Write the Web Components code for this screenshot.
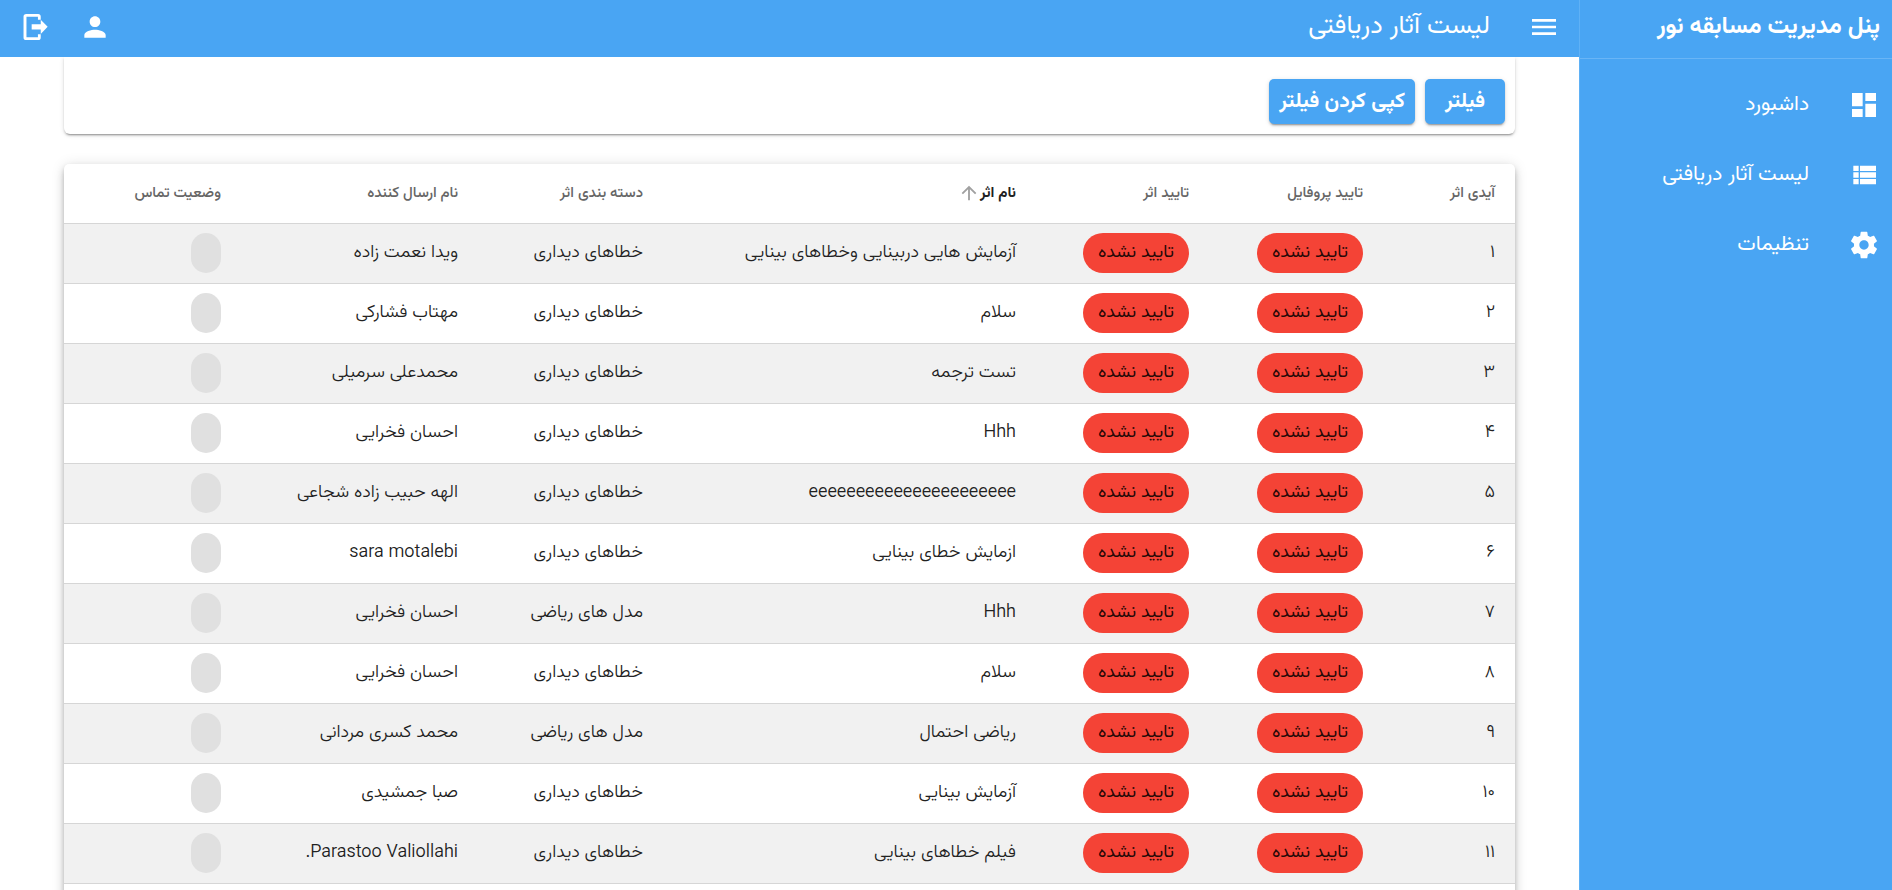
<!DOCTYPE html>
<html lang="fa" dir="rtl">
<head>
<meta charset="utf-8">
<title>لیست آثار دریافتی</title>
<style>
  html, body { margin: 0; height: 100%; }
  body {
    font-family: Vazirmatn, Roboto, "DejaVu Sans", sans-serif;
    background: #fff;
    color: #212121;
    --brand: #49a5f3;
  }
</style>
</head>
<body>
<admin-shell>
  <side-bar slot="side" heading="پنل مدیریت مسابقه نور">
    <nav-item icon="dashboard">داشبورد</nav-item>
    <nav-item icon="list">لیست آثار دریافتی</nav-item>
    <nav-item icon="settings">تنظیمات</nav-item>
  </side-bar>
  <top-bar slot="top" heading="لیست آثار دریافتی">
    <icon-button slot="menu" icon="menu" label="منو"></icon-button>
    <icon-button slot="actions" icon="person" label="حساب کاربری"></icon-button>
    <icon-button slot="actions" icon="logout" label="خروج"></icon-button>
  </top-bar>
  <filter-card>
    <action-button>فیلتر</action-button>
    <action-button>کپی کردن فیلتر</action-button>
  </filter-card>
  <works-table></works-table>
</admin-shell>

<script>
const ICONS = {
  menu: 'M3 18h18v-2H3v2zm0-5h18v-2H3v2zm0-7v2h18V6H3z',
  dashboard: 'M3 13h8V3H3v10zm0 8h8v-6H3v6zm10 0h8V11h-8v10zm0-18v6h8V3h-8z',
  list: 'M4 14h4v-4H4v4zm0 5h4v-4H4v4zM4 9h4V5H4v4zm5 5h12v-4H9v4zm0 5h12v-4H9v4zM9 5v4h12V5H9z',
  settings: 'M19.43 12.98c.04-.32.07-.64.07-.98s-.03-.66-.07-.98l2.11-1.65c.19-.15.24-.42.12-.64l-2-3.46c-.12-.22-.39-.3-.61-.22l-2.49 1c-.52-.4-1.08-.73-1.69-.98l-.38-2.65C14.46 2.18 14.25 2 14 2h-4c-.25 0-.46.18-.49.42l-.38 2.65c-.61.25-1.17.59-1.69.98l-2.49-1c-.23-.09-.49 0-.61.22l-2 3.46c-.13.22-.07.49.12.64l2.11 1.65c-.04.32-.07.65-.07.98s.03.66.07.98l-2.11 1.65c-.19.15-.24.42-.12.64l2 3.46c.12.22.39.3.61.22l2.49-1c.52.4 1.08.73 1.69.98l.38 2.65c.03.24.24.42.49.42h4c.25 0 .46-.18.49-.42l.38-2.65c.61-.25 1.17-.59 1.69-.98l2.49 1c.23.09.49 0 .61-.22l2-3.46c.12-.22.07-.49-.12-.64l-2.11-1.65zM12 15.5c-1.93 0-3.5-1.57-3.5-3.5s1.57-3.5 3.5-3.5 3.5 1.57 3.5 3.5-1.57 3.5-3.5 3.5z',
  person: 'M12 12c2.21 0 4-1.79 4-4s-1.79-4-4-4-4 1.79-4 4 1.79 4 4 4zm0 2c-2.67 0-8 1.34-8 4v2h16v-2c0-2.66-5.33-4-8-4z',
  logout: 'M16.3 17.3v-3.4H9.5v-4h6.8V6.5l5.2 5.4-5.2 5.4M14.3 2.2a2 2 0 0 1 2 2v2.3h-2.1V4.4H5.6v15.2h8.6v-2.1h2.1v2.3a2 2 0 0 1-2 2H5.4a2 2 0 0 1-2-2V4.2a2 2 0 0 1 2-2h8.9z',
  arrowUp: 'M4 12l1.41 1.41L11 7.83V20h2V7.83l5.58 5.59L20 12l-8-8-8 8z'
};
const icon = (name) => `<svg viewBox="0 0 24 24" fill="currentColor" aria-hidden="true"><path d="${ICONS[name]}"/></svg>`;

class Base extends HTMLElement {
  connectedCallback() {
    if (!this.shadowRoot) this.attachShadow({ mode: 'open' }).innerHTML = this.view();
  }
}

customElements.define('admin-shell', class extends Base {
  view() { return `
    <style>
      :host { display: flex; height: 100vh; overflow: hidden; }
      .page { flex: 1; min-width: 0; display: flex; flex-direction: column; }
      main { flex: 1; min-height: 0; overflow: hidden; padding: 0 64px; display: flex; flex-direction: column; gap: 30px; }
    </style>
    <slot name="side"></slot>
    <div class="page"><slot name="top"></slot><main><slot></slot></main></div>`; }
});

customElements.define('side-bar', class extends Base {
  view() { return `
    <style>
      :host { display: block; flex: 0 0 312px; background: var(--brand); color: #fff; border-left: 1px solid #5fb1f6; }
      h1 { margin: 0; height: 58px; padding: 0 12px; border-bottom: 1px solid #69b5f6; font-size: 24px; line-height: 54px; font-weight: 700; white-space: nowrap; }
      nav { display: flex; flex-direction: column; padding-top: 11px; }
    </style>
    <h1>${this.getAttribute('heading')}</h1>
    <nav><slot></slot></nav>`; }
});

customElements.define('nav-item', class extends Base {
  view() { return `
    <style>
      :host { display: block; }
      a { display: flex; align-items: center; gap: 39px; height: 70px; padding: 0 12px; color: inherit; text-decoration: none; font-size: 21px; line-height: 32px; }
      svg { width: 32px; height: 32px; flex: none; }
    </style>
    <a href="#">${icon(this.getAttribute('icon'))}<span><slot></slot></span></a>`; }
});

customElements.define('icon-button', class extends Base {
  view() { return `
    <style>
      :host { display: block; }
      button { display: flex; align-items: center; justify-content: center; width: 60px; height: 54px; padding: 0; border: 0; background: none; color: inherit; cursor: pointer; }
      svg { width: 32px; height: 32px; }
    </style>
    <button type="button" aria-label="${this.getAttribute('label')}">${icon(this.getAttribute('icon'))}</button>`; }
});

customElements.define('top-bar', class extends Base {
  view() { return `
    <style>
      :host { display: flex; flex: none; align-items: flex-start; height: 57px; padding: 0 5px; background: var(--brand); color: #fff; position: relative; z-index: 1; }
      h2 { flex: 1; margin: 0; padding: 0 24px; font-size: 26px; line-height: 54px; font-weight: 400; }
    </style>
    <slot name="menu"></slot>
    <h2>${this.getAttribute('heading')}</h2>
    <slot name="actions"></slot>`; }
});

customElements.define('filter-card', class extends Base {
  view() { return `
    <style>
      :host { display: flex; flex: none; gap: 10px; padding: 22px 10px 10px; background: #fff; border-radius: 0 0 6px 6px;
        box-shadow: 0 3px 1px -2px rgba(0,0,0,.2), 0 2px 2px rgba(0,0,0,.14), 0 1px 5px rgba(0,0,0,.12); }
    </style>
    <slot></slot>`; }
});

customElements.define('action-button', class extends Base {
  view() { return `
    <style>
      :host { display: block; }
      button { height: 45px; min-width: 80px; padding: 0 10px; border: 0; border-radius: 5px; background: var(--brand); color: #fff; font: 700 21px/45px Vazirmatn, Roboto, "DejaVu Sans", sans-serif; cursor: pointer;
        box-shadow: 0 3px 1px -2px rgba(0,0,0,.2), 0 2px 2px rgba(0,0,0,.14), 0 1px 5px rgba(0,0,0,.12); }
    </style>
    <button type="button"><slot></slot></button>`; }
});

customElements.define('status-chip', class extends Base {
  view() { return `
    <style>
      :host { display: block; width: fit-content; box-sizing: border-box; height: 40px; padding: 0 15px; border-radius: 20px; background: #e0e0e0; color: rgba(0,0,0,.87); font-size: 18px; line-height: 40px; font-weight: 400; }
      :host([kind="rejected"]) { background: #f44336; }
    </style>
    <slot></slot>`; }
});

const COLUMNS = [
  ['آیدی اثر', 132], ['تایید پروفایل', 174], ['تایید اثر', 173], ['نام اثر', 373],
  ['دسته بندی اثر', 185], ['نام ارسال کننده', 237], ['وضعیت تماس', 177]
];
const SORTED = 3;
const VISUAL = 'خطاهای دیداری';
const MATH = 'مدل های ریاضی';
const WORKS = [
  ['۱', 'آزمایش هایی دربینایی وخطاهای بینایی', VISUAL, 'ویدا نعمت زاده'],
  ['۲', 'سلام', VISUAL, 'مهتاب فشارکی'],
  ['۳', 'تست ترجمه', VISUAL, 'محمدعلی سرمیلی'],
  ['۴', 'Hhh', VISUAL, 'احسان فخرایی'],
  ['۵', 'eeeeeeeeeeeeeeeeeeeeee', VISUAL, 'الهه حبیب زاده شجاعی'],
  ['۶', 'ازمایش خطای بینایی', VISUAL, 'sara motalebi'],
  ['۷', 'Hhh', MATH, 'احسان فخرایی'],
  ['۸', 'سلام', VISUAL, 'احسان فخرایی'],
  ['۹', 'ریاضی احتمال', MATH, 'محمد کسری مردانی'],
  ['۱۰', 'آزمایش بینایی', VISUAL, 'صبا جمشیدی'],
  ['۱۱', 'فیلم خطاهای بینایی', VISUAL, 'Parastoo Valiollahi.'],
  ['', '', '', '']
];

customElements.define('works-table', class extends Base {
  view() {
    const chip = (id) => id ? '<status-chip kind="rejected">تایید نشده</status-chip>' : '';
    return `
    <style>
      :host { display: block; flex: none; background: #fff; border-radius: 5px;
        box-shadow: 0 3px 5px -1px rgba(0,0,0,.2), 0 5px 8px rgba(0,0,0,.14), 0 1px 14px rgba(0,0,0,.12); }
      table { width: 100%; table-layout: fixed; border-collapse: separate; border-spacing: 0; }
      th, td { box-sizing: border-box; height: 60px; padding: 0 20px 1px 0; text-align: right; white-space: nowrap; border-bottom: 1px solid #d6d6d6; }
      th { font-size: 15px; line-height: 24px; font-weight: 500; color: #666; padding-bottom: 0; }
      th.sorted { color: #212121; font-weight: 700; }
      th svg { width: 22px; height: 22px; color: #a0a0a0; vertical-align: middle; }
      td { font-size: 18px; line-height: 28px; font-weight: 300; }
      tbody tr:nth-child(odd) { background: #f1f1f1; }
    </style>
    <table>
      <colgroup>${COLUMNS.map(([, w]) => `<col style="width:${w}px">`).join('')}</colgroup>
      <thead><tr>${COLUMNS.map(([t], i) => i === SORTED ? `<th class="sorted" scope="col" aria-sort="ascending">${t}${icon('arrowUp')}</th>` : `<th scope="col">${t}</th>`).join('')}</tr></thead>
      <tbody>${WORKS.map(([id, name, cat, by]) => `<tr><td>${id}</td><td>${chip(id)}</td><td>${chip(id)}</td><td>${name}</td><td>${cat}</td><td>${by}</td><td>${id ? '<status-chip></status-chip>' : ''}</td></tr>`).join('')}</tbody>
    </table>`;
  }
});
</script>
</body>
</html>
